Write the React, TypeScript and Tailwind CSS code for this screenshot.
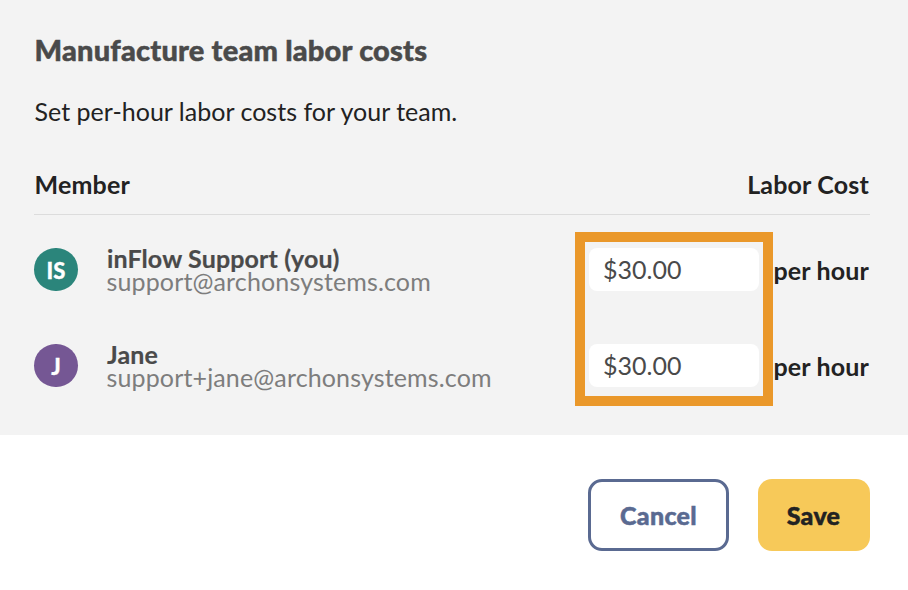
type Member = {
  initials: string;
  name: string;
  email: string;
  cost: string;
  color: string;
};

const members: Member[] = [
  {
    initials: "IS",
    name: "inFlow Support (you)",
    email: "support@archonsystems.com",
    cost: "$30.00",
    color: "bg-[#2b857b]",
  },
  {
    initials: "J",
    name: "Jane",
    email: "support+jane@archonsystems.com",
    cost: "$30.00",
    color: "bg-[#755794]",
  },
];

function MemberRow({ member }: { member: Member }) {
  return (
    <div className="flex h-[43px] items-center">
      <div
        className={`flex h-[43px] w-11 items-center justify-center rounded-full pt-px text-[22px] font-black text-white [-webkit-text-stroke:0.3px_currentColor] ${member.color}`}
      >
        {member.initials}
      </div>
      <div className="ml-[29px] flex-1 pb-px text-[25px]">
        <div className="font-bold leading-6 tracking-[0.13px] text-[#4a4a4a] [-webkit-text-stroke:0.2px_currentColor]">{member.name}</div>
        <div className="-ml-[0.5px] leading-[23px] tracking-[0.14px] text-[#7d7d7d]">{member.email}</div>
      </div>
      <div className="flex h-[43px] w-[170px] items-center rounded-lg bg-white pb-px pl-[14px] text-[25px] text-[#4a4a4a]">
        <span className="relative top-px">{member.cost}</span>
      </div>
      <div className="w-[111px] pr-px pt-[3px] text-right text-[25px] font-bold tracking-[0.15px] text-[#222]">per hour</div>
    </div>
  );
}

export default function App() {
  return (
    <div className="h-[590px] w-[908px] overflow-hidden bg-white font-['Lato',sans-serif] text-[#222]">
      <div className="relative h-[435px] bg-[#f3f3f3] pl-[34px] pr-[38px] pt-8">
        <h1 className="pl-[0.5px] text-[29px] font-black leading-9 tracking-[0.2px] text-[#4a4a4a] [-webkit-text-stroke:0.5px_currentColor]">
          Manufacture team labor costs
        </h1>
        <p className="mt-[25px] pl-[0.5px] text-[25px] leading-9 tracking-[0.02px]">Set per-hour labor costs for your team.</p>
        <div className="mt-[37px] flex h-[49px] justify-between border-b border-[#dcdcdc] pr-px text-[25px] font-bold leading-9 tracking-[0.18px]">
          <span className="pl-[0.5px]">Member</span>
          <span>Labor Cost</span>
        </div>
        <div className="mt-[33px] flex flex-col gap-[53px]">
          {members.map((member) => (
            <MemberRow key={member.email} member={member} />
          ))}
        </div>
        {/* Highlight around the cost inputs */}
        <div className="pointer-events-none absolute left-[575px] top-[232px] h-[174px] w-[198px] border-[10px] border-[#ea982a]" />
      </div>
      <div className="flex justify-end gap-[29px] pr-[38px] pt-[44px] text-[25px] font-black tracking-[0.3px] [-webkit-text-stroke:0.5px_currentColor]">
        <button className="h-[72px] w-[141px] rounded-[14px] border-3 border-[#5a6a91] pt-0.5 text-[#5a6a91]">Cancel</button>
        <button className="h-[72px] w-[112px] rounded-[14px] bg-[#f7c959] pr-px pt-0.5 text-[#222]">Save</button>
      </div>
    </div>
  );
}
